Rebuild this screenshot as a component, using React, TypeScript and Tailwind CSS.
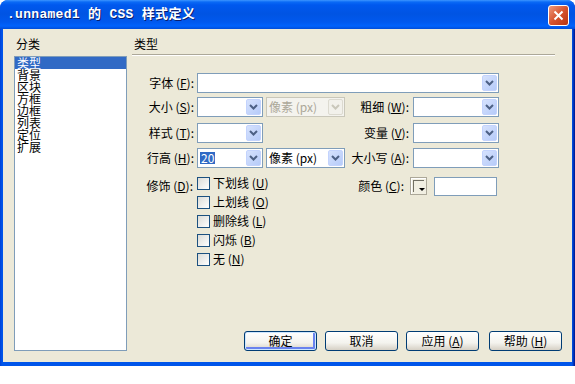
import React from "react";

const F = { fontFamily: '"Noto Sans CJK SC", "Noto Sans", sans-serif' };

function Arrow({ disabled }: { disabled?: boolean }) {
  return (
    <div
      className={
        "m-[1px] flex h-[16px] w-[15px] shrink-0 items-center justify-center rounded-[2px] " +
        (disabled
          ? "bg-[#F2F1EB] border border-[#DCDAD0]"
          : "bg-[linear-gradient(135deg,#D6E2FD_0%,#B6CBF9_100%)] border border-[#C3D3FD]")
      }
    >
      <svg width="9" height="6" viewBox="0 0 9 6">
        <path
          d="M1 1 L4.5 4.5 L8 1"
          fill="none"
          stroke={disabled ? "#C9C7BA" : "#4D6185"}
          strokeWidth="2"
        />
      </svg>
    </div>
  );
}

function Select({
  w,
  value,
  disabled,
  selected,
}: {
  w: string;
  value?: string;
  disabled?: boolean;
  selected?: boolean;
}) {
  return (
    <div
      className={
        "flex h-[20px] items-stretch justify-between border " +
        w +
        (disabled ? " border-[#C9C7BA] bg-[#F4F3EE]" : " border-[#7F9DB9] bg-white")
      }
    >
      <div className="flex items-center pl-[2px] text-[12px] leading-[12px]">
        {value && (
          <span
            className={
              selected
                ? "bg-[#316AC5] px-[1px] text-white"
                : disabled
                ? "text-[#ACA899]"
                : "text-black"
            }
          >
            {value}
          </span>
        )}
      </div>
      <Arrow disabled={disabled} />
    </div>
  );
}

function Lbl({ t, k, w, pr = "pr-[3px]" }: { t: string; k: string; w: string; pr?: string }) {
  return (
    <div className={"shrink-0 text-right text-[12px] leading-[20px] text-black " + w + " " + pr}>
      {t} (<span className="underline">{k}</span>):
    </div>
  );
}

function Check({ t, k }: { t: string; k: string }) {
  return (
    <div className="flex h-[19px] items-start">
      <div className="h-[13px] w-[13px] shrink-0 border border-[#1C5180] bg-[linear-gradient(135deg,#DCDCD7_0%,#FFFFFF_100%)]" />
      <div className="ml-[3px] mt-[-1px] text-[12px] leading-[14px] text-black">
        {t} (<span className="underline">{k}</span>)
      </div>
    </div>
  );
}

function Btn({ children, def, cls = "" }: { children: React.ReactNode; def?: boolean; cls?: string }) {
  return (
    <div
      className={
        "flex h-[20px] w-[73px] items-center justify-center rounded-[3px] border border-[#003C74] bg-[linear-gradient(to_bottom,#FFFFFF_0%,#F4F3EE_60%,#D6D0C5_100%)] text-[12px] leading-[12px] text-black " +
        (def ? "shadow-[inset_0_0_0_1px_#CEE7FF,inset_-1px_-1px_0_2px_#6982EE] " : "") +
        cls
      }
    >
      {children}
    </div>
  );
}

export default function App() {
  const items = ["类型", "背景", "区块", "方框", "边框", "列表", "定位", "扩展"];
  return (
    <div className="h-[384px] w-[575px] bg-white" style={F}>
      <div className="flex h-[366px] w-[575px] flex-col rounded-t-[8px] bg-[linear-gradient(to_right,#0041D6_0px,#0055EA_2px,#0055EA_572px,#00138C_575px)]">
        {/* title bar */}
        <div className="flex h-[29px] shrink-0 items-start justify-between rounded-t-[8px] bg-[linear-gradient(to_bottom,#3D95FF_0px,#0A6AF6_2px,#0058EE_5px,#0054E3_14px,#0058EE_22px,#0062FC_26px,#004DD9_29px)] pl-[7px] pr-[6px]">
          <div
            className="mt-[7px] text-[13px] font-bold leading-[16px] tracking-[0.3px] text-white [text-shadow:1px_1px_0_#0A1E6E]"
            style={{ fontFamily: '"Liberation Mono", "Noto Sans CJK SC", monospace' }}
          >
            .unnamed1 的 CSS 样式定义
          </div>
          <div className="mt-[5px] flex h-[21px] w-[21px] items-center justify-center rounded-[3px] border border-white bg-[linear-gradient(135deg,#F09A7D_0%,#D5532F_50%,#B93410_100%)]">
            <svg width="11" height="11" viewBox="0 0 11 11">
              <path d="M1.5 1.5 L9.5 9.5 M9.5 1.5 L1.5 9.5" stroke="white" strokeWidth="2" />
            </svg>
          </div>
        </div>
        {/* client */}
        <div className="mx-[3px] mb-[4px] flex flex-1 bg-[#ECE9D8] pb-[11px] pl-[11px] pt-[9px]">
          {/* left column */}
          <div className="flex w-[113px] shrink-0 flex-col">
            <div className="pl-[2px] text-[12px] leading-[12px] text-black">分类</div>
            <div className="mt-[6px] flex-1 border border-[#7F9DB9] bg-white">
              {items.map((t, i) => (
                <div
                  key={t}
                  className={
                    "h-[12px] pl-[2px] text-[12px] leading-[12px] " +
                    (i === 0 ? "bg-[#316AC5] text-white" : "text-black")
                  }
                >
                  {t}
                </div>
              ))}
            </div>
          </div>
          {/* right column */}
          <div className="ml-[5px] flex flex-1 flex-col">
            <div className="mr-[17px] border-b border-[#ACA899] pb-[4px] pl-[2px] text-[12px] leading-[12px] text-black shadow-[0_1px_0_#FFFFFF]">
              类型
            </div>
            <div className="ml-[8px] mt-[18px] flex flex-col">
              <div className="flex items-center">
                <Lbl t="字体" k="F" w="w-[57px]" />
                <Select w="w-[302px]" />
              </div>
              <div className="mt-[4px] flex items-center">
                <Lbl t="大小" k="S" w="w-[57px]" />
                <Select w="w-[66px]" />
                <div className="w-[3px]" />
                <Select w="w-[79px]" value="像素 (px)" disabled />
                <Lbl t="粗细" k="W" w="w-[68px]" pr="pr-[4px]" />
                <Select w="w-[86px]" />
              </div>
              <div className="mt-[6px] flex items-center">
                <Lbl t="样式" k="T" w="w-[57px]" />
                <Select w="w-[66px]" />
                <div className="w-[82px]" />
                <Lbl t="变量" k="V" w="w-[68px]" pr="pr-[4px]" />
                <Select w="w-[86px]" />
              </div>
              <div className="mt-[5px] flex items-center">
                <Lbl t="行高" k="H" w="w-[57px]" />
                <Select w="w-[66px]" value="20" selected />
                <div className="w-[3px]" />
                <Select w="w-[79px]" value="像素 (px)" />
                <Lbl t="大小写" k="A" w="w-[68px]" pr="pr-[4px]" />
                <Select w="w-[86px]" />
              </div>
              <div className="mt-[8px] flex items-start">
                <Lbl t="修饰" k="D" w="w-[57px]" pr="pr-[4px]" />
                <div className="mt-[1px] flex w-[148px] flex-col">
                  <Check t="下划线" k="U" />
                  <Check t="上划线" k="O" />
                  <Check t="删除线" k="L" />
                  <Check t="闪烁" k="B" />
                  <Check t="无" k="N" />
                </div>
                <Lbl t="颜色" k="C" w="w-[65px]" pr="pr-[6px]" />
                <div className="mt-[1px] flex h-[18px] w-[17px] items-end justify-end border border-[#ACA899] bg-[#F1EFE2] p-[2px] shadow-[inset_1px_1px_0_#FFFFFF]">
                  <div className="relative h-[12px] w-[11px] border-l border-t border-[#716F64]">
                    <svg className="absolute bottom-[0px] right-[-1px]" width="6" height="4" viewBox="0 0 6 4">
                      <path d="M0 0 H6 L3 3 Z" fill="#000" />
                    </svg>
                  </div>
                </div>
                <div className="ml-[7px] mt-[1px] h-[19px] w-[63px] border border-[#7F9DB9] bg-white" />
              </div>
            </div>
            <div className="mt-auto flex justify-end pr-[10px]">
              <Btn def cls="mr-[8px]">确定</Btn>
              <Btn cls="mr-[8px]">取消</Btn>
              <Btn cls="mr-[10px]">
                应用 (<span className="underline">A</span>)
              </Btn>
              <Btn>
                帮助 (<span className="underline">H</span>)
              </Btn>
            </div>
          </div>
        </div>
      </div>
    </div>
  );
}
